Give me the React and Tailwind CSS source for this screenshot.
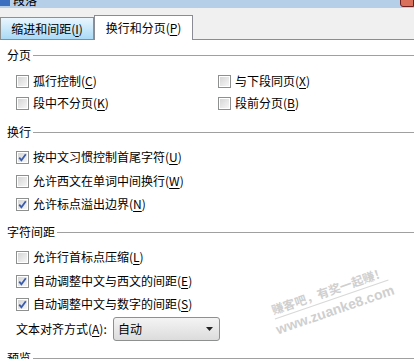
const font = { fontFamily: '"Noto Sans CJK SC", "Liberation Sans", sans-serif' }

function Box({ checked }) {
  return (
    <span className="flex h-[13px] w-[13px] shrink-0 items-center justify-center border border-[#8e8f8f] bg-white p-[1px]">
      <span className="relative flex h-full w-full items-center justify-center bg-gradient-to-br from-[#d6d6d6] to-[#f6f6f6]">
        {checked && (
          <svg width="9" height="9" viewBox="0 0 9 9" className="absolute">
            <path d="M1.2 4.6 L3.4 7.2 L7.8 1.2" fill="none" stroke="#3b5cab" strokeWidth="1.8" />
          </svg>
        )}
      </span>
    </span>
  )
}

function Label({ text, k }) {
  return (
    <span className="whitespace-nowrap">
      {text}(<span className="underline underline-offset-2">{k}</span>)
    </span>
  )
}

function Check({ text, k, checked }) {
  return (
    <div className="flex h-[22px] items-center gap-[4px]">
      <Box checked={checked} />
      <Label text={text} k={k} />
    </div>
  )
}

function Heading({ children, className }) {
  return (
    <div className={`flex h-[16px] items-center gap-[2px] pl-[7px] ${className}`}>
      <span className="whitespace-nowrap">{children}</span>
      <div className="h-px flex-1 bg-[#a0a0a0]" />
    </div>
  )
}

export default function App() {
  return (
    <div className="relative h-[359px] w-[414px] overflow-hidden bg-white text-[12px] leading-none text-black" style={font}>
      <div className="relative h-[8px] overflow-hidden bg-[#b6cfe9]">
        <div className="absolute left-0 top-[-6px] flex items-center gap-[3px]">
          <span className="h-[12px] w-[10px] bg-[#3d6fc1]" />
          <span className="text-[12px] leading-[12px]">段落</span>
        </div>
        <div className="absolute right-0 top-[-8px] h-[15px] w-[14px] rounded-bl-[3px] border border-[#6d1f1f] bg-[#d8705c]" />
      </div>

      <div className="flex h-[31px] items-end bg-[#f0f0f0]">
        <div className="flex h-[22px] w-[94px] items-center justify-center border border-b-0 border-[#8e8f8f] bg-gradient-to-b from-[#eaf6fd] to-[#a9daf6]">
          <Label text="缩进和间距" k="I" />
        </div>
        <div className="relative -mb-px flex h-[25px] w-[99px] items-center justify-center border border-b-0 border-[#898c95] bg-white pb-[1px]">
          <Label text="换行和分页" k="P" />
        </div>
      </div>

      <div className="border-t border-[#898c95] bg-white">
        <Heading className="mt-[7px]">分页</Heading>
        <div className="mt-[7px] grid grid-cols-[202px_1fr] pl-[16px]">
          <Check text="孤行控制" k="C" />
          <Check text="与下段同页" k="X" />
          <Check text="段中不分页" k="K" />
          <Check text="段前分页" k="B" />
        </div>

        <Heading className="mt-[10px]">换行</Heading>
        <div className="pl-[16px]">
          <div className="mt-[6px]"><Check text="按中文习惯控制首尾字符" k="U" checked /></div>
          <div className="mt-[2px]"><Check text="允许西文在单词中间换行" k="W" /></div>
          <div className="mt-[1px]"><Check text="允许标点溢出边界" k="N" checked /></div>
        </div>

        <Heading className="mt-[9px]">字符间距</Heading>
        <div className="pl-[16px]">
          <div className="mt-[6px]"><Check text="允许行首标点压缩" k="L" /></div>
          <div className="mt-[2px]"><Check text="自动调整中文与西文的间距" k="E" checked /></div>
          <div className="mt-[1px]"><Check text="自动调整中文与数字的间距" k="S" checked /></div>
          <div className="mt-[2px] flex h-[24px] items-center">
            <span className="w-[97px] whitespace-nowrap">
              文本对齐方式(<span className="underline underline-offset-2">A</span>):
            </span>
            <div className="flex h-[24px] w-[107px] items-center justify-between rounded-[3px] border border-[#8e8f8f] bg-gradient-to-b from-[#f4f4f4] to-[#dcdcdc] pl-[4px] pr-[6px]">
              <span>自动</span>
              <svg width="7" height="4" viewBox="0 0 7 4"><path d="M0 0 H7 L3.5 4 Z" fill="#222" /></svg>
            </div>
          </div>
        </div>

        <Heading className="mt-[9px]">预览</Heading>
      </div>

      <div className="pointer-events-none absolute left-[266px] top-[284px] flex w-[132px] -rotate-[19deg] flex-col items-center text-[#cfcfcf]">
        <span className="border-b border-[#d8d8d8] pb-[3px] text-[12px] font-bold leading-[12px]">赚客吧，有奖一起赚！</span>
        <span className="mt-[3px] text-[14px] font-bold leading-[14px]" style={{ fontFamily: '"Liberation Sans", sans-serif' }}>www.zuanke8.com</span>
      </div>
    </div>
  )
}
